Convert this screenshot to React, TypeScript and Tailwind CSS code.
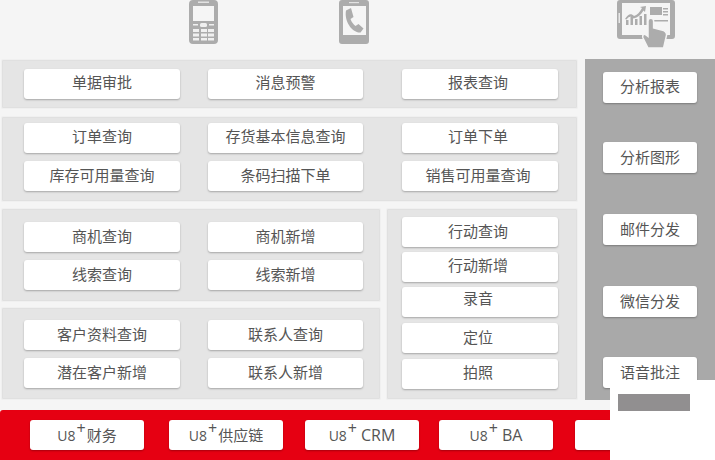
import React from "react";

const font = "font-['Open_Sans','Noto_Sans_CJK_SC',sans-serif]";

function Btn({ label, className = "" }: { label: React.ReactNode; className?: string }) {
  return (
    <div
      className={`bg-white rounded-[3px] shadow-[0_1px_2px_rgba(0,0,0,0.28)] flex items-center justify-center text-[15px] leading-none text-[#555] ${className}`}
    >
      {label}
    </div>
  );
}

function U8({ name, latin = false }: { name: string; latin?: boolean }) {
  return (
    <span className="flex items-baseline">
      <span className="text-[14px]">U8</span>
      <span className="text-[16px] leading-none relative top-[-7px] mx-[1px]">+</span>
      <span className={latin ? "ml-[3px] text-[16px]" : ""}>{name}</span>
    </span>
  );
}

const panel = "bg-[#e5e5e5] border border-[#f0f0f0] shadow-[inset_0_0_0_1px_#e0e0e0] rounded-[2px]";

function Row({ items, last = false, up = "pb-[2px]" }: { items: string[]; last?: boolean; up?: string }) {
  return (
    <div className={`flex gap-[28px] ${last ? "" : "mb-[8px]"}`}>
      <Btn label={items[0]} className={`w-[156px] h-[30px] ${up}`} />
      <Btn label={items[1]} className={`w-[155px] h-[30px] ${up}`} />
      {items[2] && <Btn label={items[2]} className={`w-[156px] h-[30px] ml-[11px] pr-[4px] ${up}`} />}
    </div>
  );
}

function PhoneIcon() {
  return (
    <svg width="29" height="44" viewBox="0 0 29 44" fill="#acacac">
      <path fillRule="evenodd" d="M4 0h21a4 4 0 0 1 4 4v36a4 4 0 0 1-4 4H4a4 4 0 0 1-4-4V4a4 4 0 0 1 4-4ZM4 6v15h21V6Z" />
      <rect x="9" y="1.500" width="11" height="1.500" fill="#e2e2e2" />
      <g fill="#f0f0f0">
        <rect x="11" y="23" width="7" height="4" rx="1.500" />
        <rect x="4" y="24" width="5" height="1.500" />
        <rect x="20" y="24" width="5" height="1.500" />
        <rect x="4" y="29" width="6" height="3" />
        <rect x="12" y="29" width="6" height="3" />
        <rect x="19" y="29" width="6" height="3" />
        <rect x="4" y="33.500" width="6" height="3" />
        <rect x="12" y="33.500" width="6" height="3" />
        <rect x="19" y="33.500" width="6" height="3" />
        <rect x="4" y="38" width="6" height="2.500" />
        <rect x="12" y="38" width="6" height="2.500" />
        <rect x="19" y="38" width="6" height="2.500" />
      </g>
    </svg>
  );
}

function CallIcon() {
  return (
    <svg width="30" height="44" viewBox="0 0 30 44" fill="#acacac">
      <path fillRule="evenodd" d="M3 0h24a3 3 0 0 1 3 3v38a3 3 0 0 1-3 3H3a3 3 0 0 1-3-3V3a3 3 0 0 1 3-3ZM4 6v29h23V6Z" />
      <rect x="10" y="2" width="10" height="1.200" fill="#e2e2e2" />
      <path d="M7 10.500 12 8l2.500 9-3 2c1 3 3 5.500 5 7l3-2 5 4.500-3 4C13 33 5 21 7 10.500Z" />
    </svg>
  );
}

function TabletIcon() {
  return (
    <svg width="58" height="48" viewBox="0 0 58 48" fill="#acacac">
      <path
        fillRule="evenodd"
        d="M3 0h52a3 3 0 0 1 3 3v33a3 3 0 0 1-3 3H3a3 3 0 0 1-3-3V3a3 3 0 0 1 3-3ZM5 3v32h48V3Z"
      />
      <rect x="1.500" y="13" width="1.500" height="10" fill="#e8e8e8" />
      <path d="M9 25v-5h2.500v5Zm4.500 0v-8h2.500v8Zm4.500 0v-6h2.500v6Zm4.500 0v-9h2.500v9Zm4.500 0v-11h2.500v11Z" />
      <path d="M8 19c3-5 6-6 9-3 3-1 6-4 8-8l-2-1 6-1-1 6-1.500-1.500c-2 4-6 7-10 8-3-3-5-2-7 1Z" />
      <rect x="33" y="7" width="12" height="8" />
      <path d="M46 8h5v1.500h-5Zm0 3h5v1.500h-5Zm0 3h5v1.500h-5ZM36 20h15v1.500H36Z" />
      <path
        stroke="#f5f5f5"
        strokeWidth="1.500"
        d="M31 21a2.800 2.800 0 0 1 5.600 0v7l8 2c3 .5 5 2 5 5l-3 13H31l-5-10c-1-3 1-5 3-3l2 1.500Z"
      />
    </svg>
  );
}

export default function App() {
  return (
    <div className={`${font} relative w-[715px] h-[460px] overflow-hidden bg-[#f5f5f5]`}>
      {/* top icons */}
      <div className="h-[59px] relative">
        <div className="flex">
          <div className="ml-[189px]"><PhoneIcon /></div>
          <div className="ml-[121px]"><CallIcon /></div>
          <div className="ml-[248px]"><TabletIcon /></div>
        </div>
      </div>

      <div className="flex h-[341px]">
        <div className="w-[577px] ml-[1px]">
          <div className={`${panel} h-[50px] pt-[9px] pl-[22px]`}>
            <Row items={["单据审批", "消息预警", "报表查询"]} last up="pb-[4px]" />
          </div>
          <div className={`${panel} h-[86px] mt-[7px] pt-[6px] pl-[22px]`}>
            <Row items={["订单查询", "存货基本信息查询", "订单下单"]} up="pb-[4px]" />
            <Row items={["库存可用量查询", "条码扫描下单", "销售可用量查询"]} last />
          </div>
          <div className="flex mt-[6px] gap-[5px]">
            <div className="w-[380px]">
              <div className={`${panel} h-[94px] pt-[13px] pl-[22px]`}>
                <Row items={["商机查询", "商机新增"]} />
                <Row items={["线索查询", "线索新增"]} last />
              </div>
              <div className={`${panel} h-[93px] mt-[5px] pt-[12px] pl-[22px]`}>
                <Row items={["客户资料查询", "联系人查询"]} />
                <Row items={["潜在客户新增", "联系人新增"]} last />
              </div>
            </div>
            <div className={`${panel} w-[192px] h-[192px] pt-[8px] pl-[15px]`}>
              <Btn label="行动查询" className="w-[156px] h-[30px] pb-[2px] pr-[4px]" />
              <Btn label="行动新增" className="w-[156px] h-[30px] mt-[5px] pb-[4px] pr-[4px]" />
              <Btn label="录音" className="w-[156px] h-[30px] mt-[5px] pb-[8px] pr-[4px]" />
              <Btn label="定位" className="w-[156px] h-[30px] mt-[6px] pb-[2px] pr-[4px]" />
              <Btn label="拍照" className="w-[156px] h-[30px] mt-[6px] pb-[4px] pr-[4px]" />
            </div>
          </div>
        </div>

        <div className="w-[130px] ml-[7px] h-[341px] bg-[#a9a9a9] pt-[13px] pl-[18px]">
          <Btn label="分析报表" className="w-[94px] h-[31px] pb-[2px]" />
          <Btn label="分析图形" className="w-[94px] h-[31px] mt-[39px]" />
          <Btn label="邮件分发" className="w-[94px] h-[31px] mt-[41px]" />
          <Btn label="微信分发" className="w-[94px] h-[31px] mt-[41px]" />
          <Btn label="语音批注" className="w-[94px] h-[31px] mt-[40px]" />
        </div>
      </div>

      {/* red bar */}
      <div className="mt-[10px] h-[50px] bg-[#e60012] rounded-tl-[3px] pt-[10px] pl-[30px] flex">
        <Btn label={<U8 name="财务" />} className="w-[114px] h-[30px] shrink-0" />
        <Btn label={<U8 name="供应链" />} className="w-[114px] h-[30px] ml-[25px] shrink-0" />
        <Btn label={<U8 name="CRM" latin />} className="w-[114px] h-[30px] ml-[22px] shrink-0" />
        <Btn label={<U8 name="BA" latin />} className="w-[114px] h-[30px] ml-[20px] shrink-0" />
        <Btn label="" className="w-[114px] h-[30px] ml-[22px] shrink-0" />
      </div>

      {/* white patch over the corner */}
      <div className="absolute left-[610px] top-[380px] w-[105px] h-[80px] bg-white">
        <div className="mt-[14px] ml-[8px] w-[72px] h-[17px] bg-[#918f90]" />
      </div>
    </div>
  );
}
